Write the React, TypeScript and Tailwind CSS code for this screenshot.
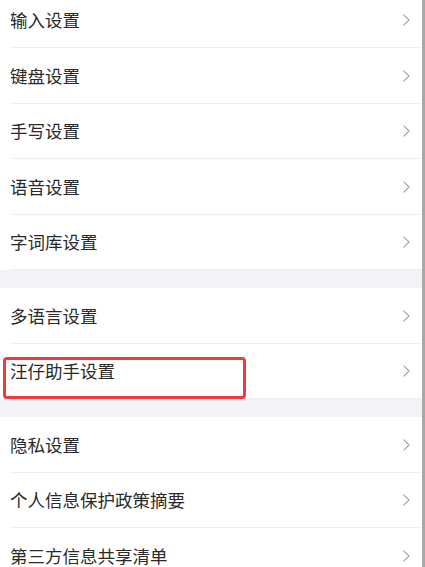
type Row = { label: string; marked?: boolean };

const groups: Row[][] = [
  [
    { label: '输入设置' },
    { label: '键盘设置' },
    { label: '手写设置' },
    { label: '语音设置' },
    { label: '字词库设置' },
  ],
  [{ label: '多语言设置' }, { label: '汪仔助手设置', marked: true }],
  [
    { label: '隐私设置' },
    { label: '个人信息保护政策摘要' },
    { label: '第三方信息共享清单' },
  ],
];

const Chevron = () => (
  <svg width="7" height="12" viewBox="0 0 7 12" fill="none" className="mt-[1px]">
    <polyline
      points="0.8,0.8 6,6 0.8,11.2"
      stroke="#a3a3a3"
      strokeWidth="1.1"
      strokeLinecap="round"
      strokeLinejoin="round"
    />
  </svg>
);

const SettingRow = ({ row }: { row: Row }) => (
  <div className="relative h-[55.5px] bg-white pl-[10px]">
    <div className="flex h-full items-center justify-between border-b border-[#eeeef0] pr-[12px]">
      <span className="text-[17.5px] leading-none text-[#2a2a2a]">{row.label}</span>
      <Chevron />
    </div>
    {row.marked && (
      // annotation box drawn over the row
      <div className="pointer-events-none absolute bottom-0 left-[3px] top-[13.5px] w-[243px] rounded-[4px] border-[3px] border-[#f03a3c]" />
    )}
  </div>
);

const App: React.FC = () => {
  return (
    <div
      className="flex h-[567px] w-[425px] overflow-hidden bg-white"
      style={{ fontFamily: '"Noto Sans CJK SC", "Noto Sans", sans-serif' }}
    >
      <div className="-mt-[7.5px] flex flex-1 flex-col">
        {groups.map((group, i) => (
          <div key={i} className="flex flex-col">
            {i > 0 && <div className="h-[18px] bg-[#f2f3f6]" />}
            {group.map((row) => (
              <SettingRow key={row.label} row={row} />
            ))}
          </div>
        ))}
      </div>
      {/* scrollbar */}
      <div className="w-[3px] bg-[#a8a8a8]" />
    </div>
  );
};

export default App;
